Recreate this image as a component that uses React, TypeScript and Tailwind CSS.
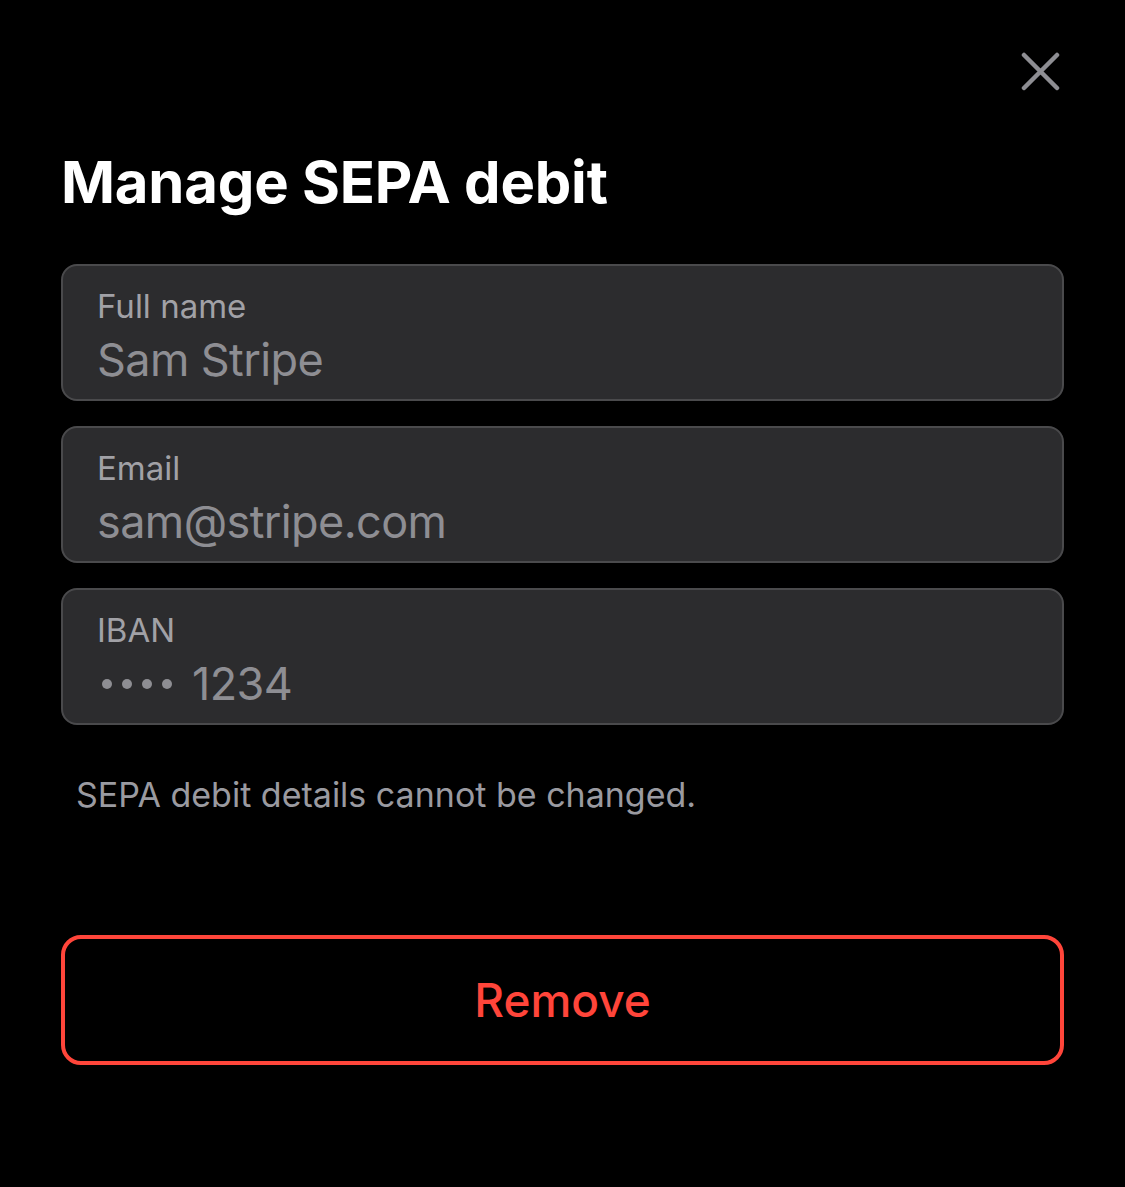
import React from "react";

function Field({ label, value, dots }: { label: string; value: string; dots?: boolean }) {
  return (
    <div className="h-[137px] rounded-[16px] border-2 border-[#4a4a4c] bg-[#2c2c2e] pl-[34px] pt-[18px]">
      <div className="text-[33px] leading-[44px] text-[#a1a1a6]">{label}</div>
      <div className="mt-[4px] flex items-center text-[45px] leading-[56px] tracking-[-0.6px] text-[#8e8e93]">
        {dots && (
          <span className="ml-[5px] mr-[20px] flex gap-[10px]">
            <span className="h-[10px] w-[10px] rounded-full bg-[#8e8e93]" />
            <span className="h-[10px] w-[10px] rounded-full bg-[#8e8e93]" />
            <span className="h-[10px] w-[10px] rounded-full bg-[#8e8e93]" />
            <span className="h-[10px] w-[10px] rounded-full bg-[#8e8e93]" />
          </span>
        )}
        <span>{value}</span>
      </div>
    </div>
  );
}

export default function App() {
  return (
    <div className="h-[1187px] w-[1125px] bg-black font-['Inter',sans-serif]">
      <div className="flex justify-end pr-[64px] pt-[52px]">
        <svg width="40" height="40" viewBox="0 0 40 40" fill="none">
          <path d="M3 3L36 36M36 3L3 36" stroke="#8e8e93" strokeWidth="4.5" strokeLinecap="round" />
        </svg>
      </div>
      <div className="px-[61px]">
        <h1 className="mt-[55px] text-[58px] font-bold leading-[70px] tracking-[-0.2px] text-white">Manage SEPA debit</h1>
        <div className="mt-[47px] flex flex-col gap-[25px]">
          <Field label="Full name" value="Sam Stripe" />
          <Field label="Email" value="sam@stripe.com" />
          <Field label="IBAN" value="1234" dots />
        </div>
        <p className="mt-[48px] pl-[15px] text-[34px] leading-[44px] text-[#9a9aa0]">SEPA debit details cannot be changed.</p>
        <button className="mt-[118px] flex h-[130px] w-full items-center justify-center rounded-[20px] border-4 border-[#ff453a] text-[46px] font-medium text-[#ff453a]">
          Remove
        </button>
      </div>
    </div>
  );
}
